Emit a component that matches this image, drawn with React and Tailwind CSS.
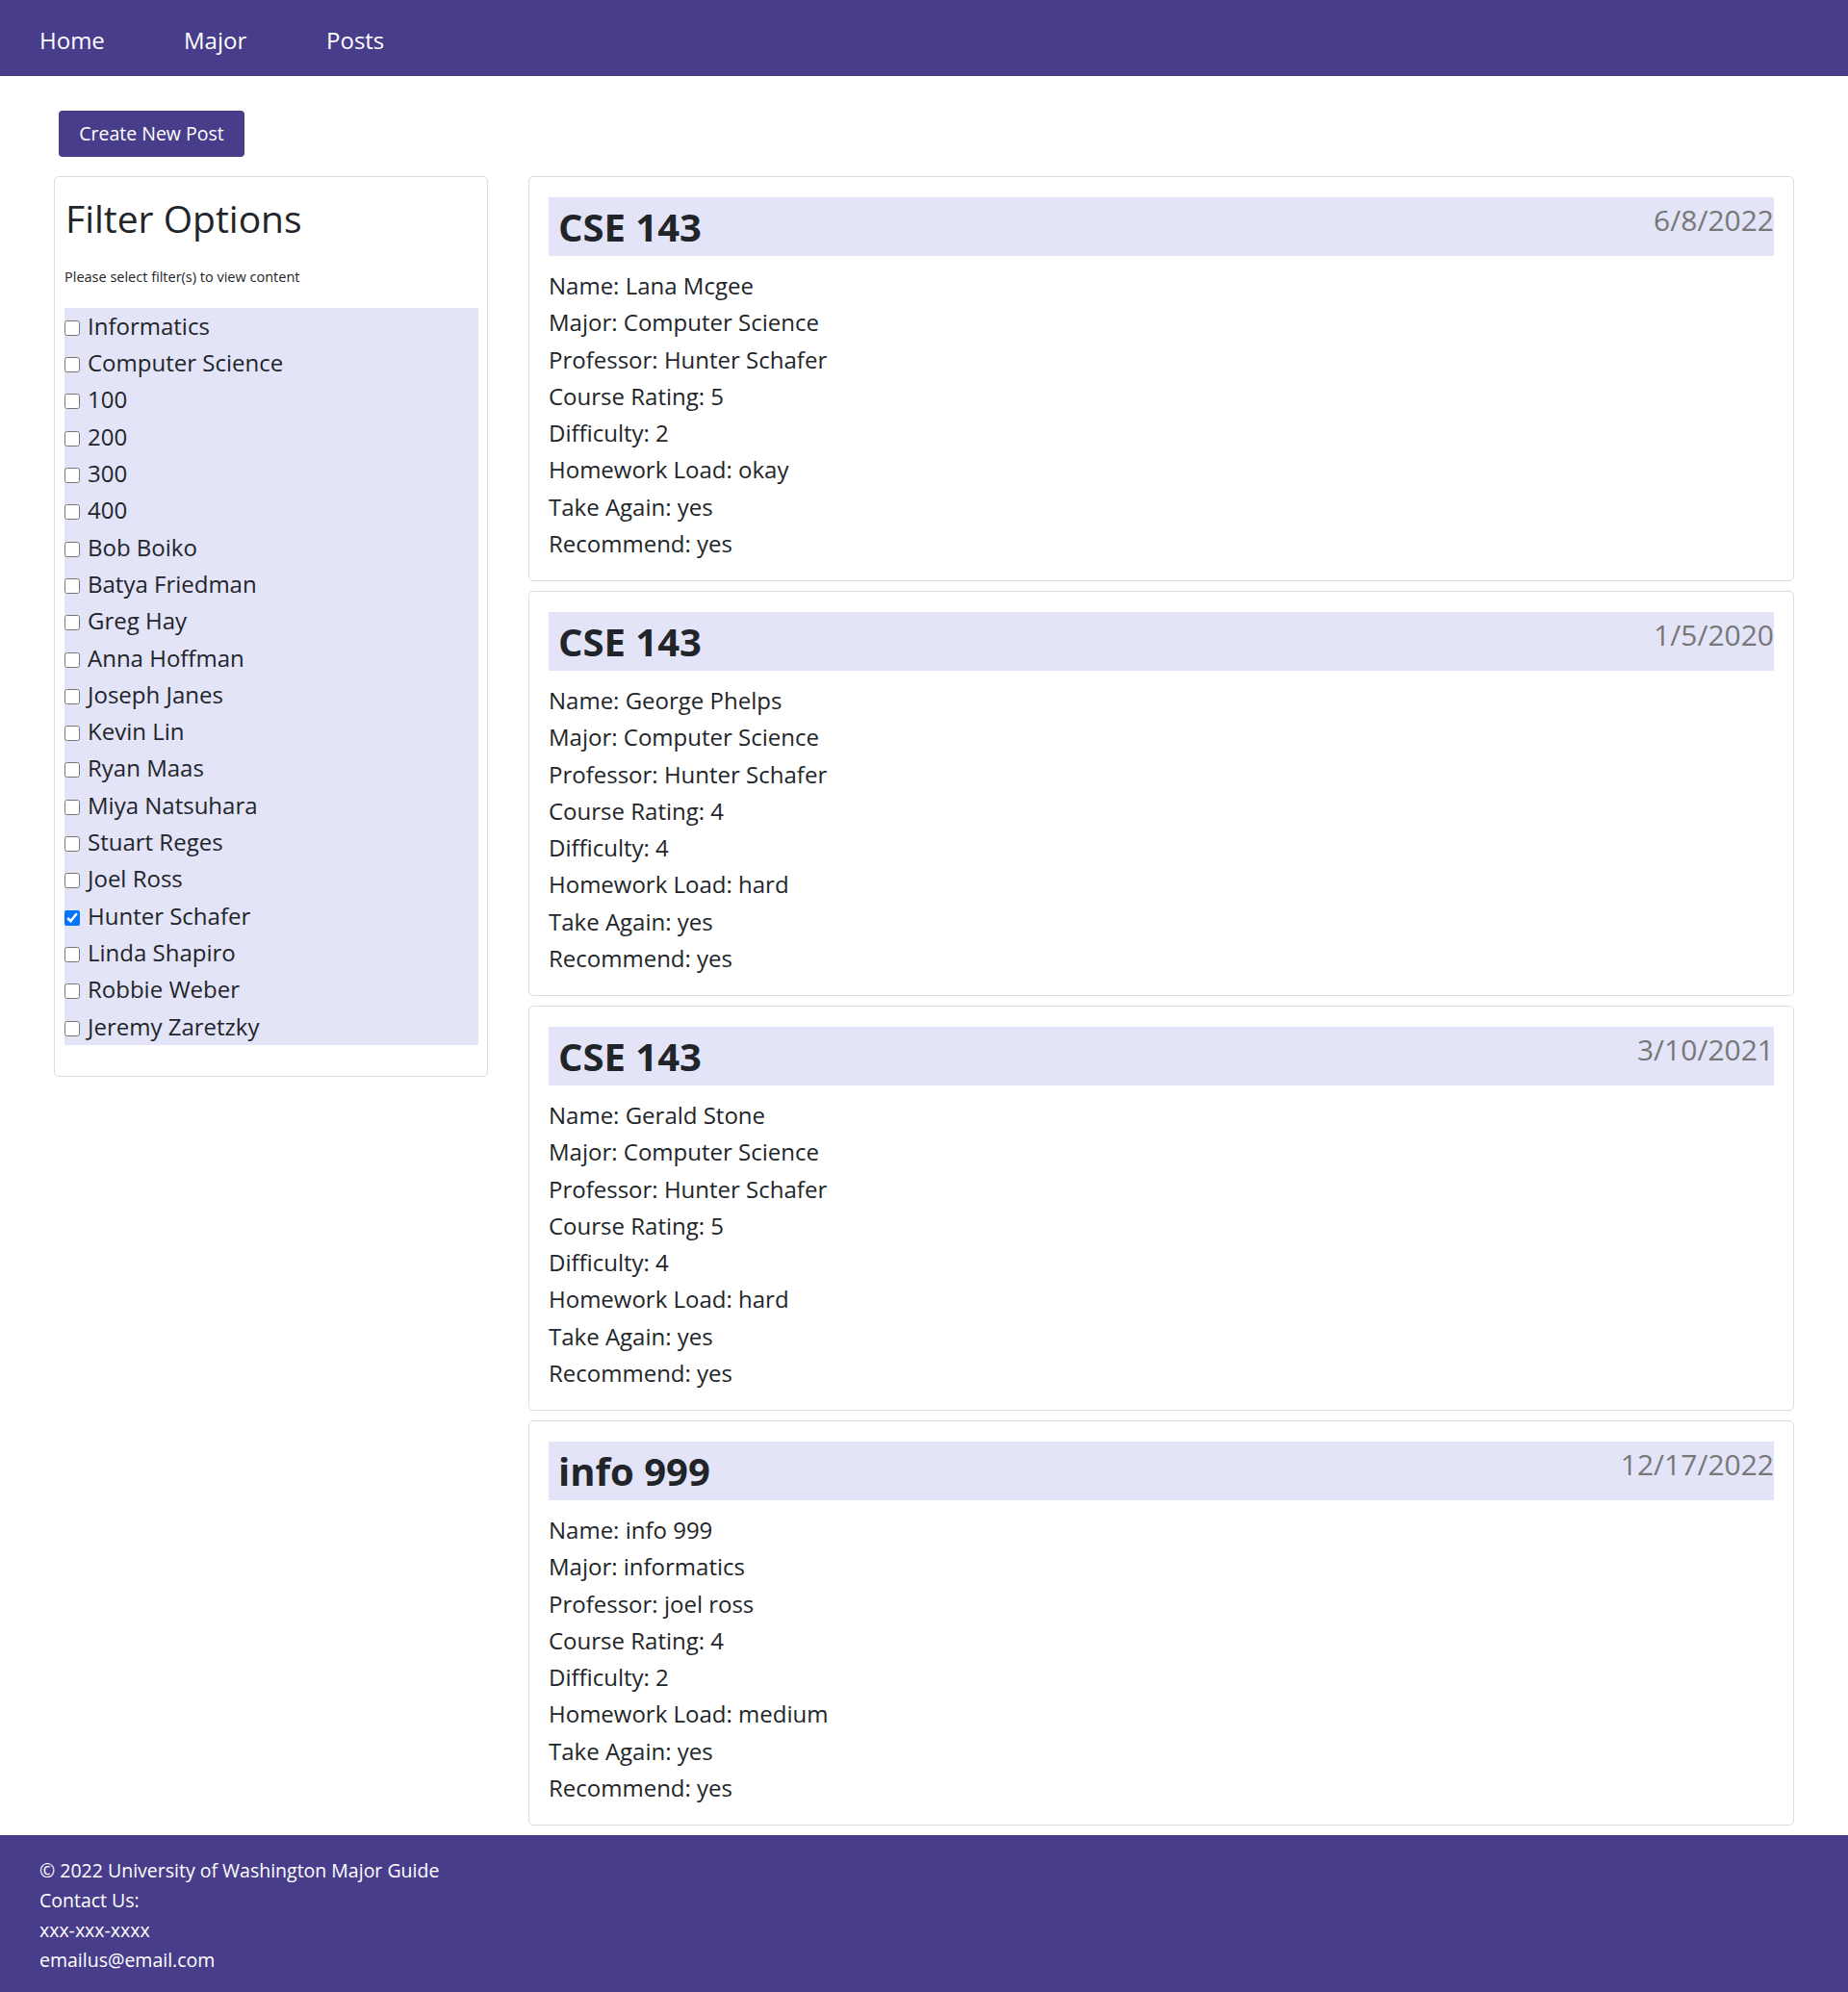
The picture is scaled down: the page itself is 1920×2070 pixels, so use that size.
import { useState } from 'react';

const filterItems = [
  'Informatics', 'Computer Science', '100', '200', '300', '400',
  'Bob Boiko', 'Batya Friedman', 'Greg Hay', 'Anna Hoffman', 'Joseph Janes',
  'Kevin Lin', 'Ryan Maas', 'Miya Natsuhara', 'Stuart Reges', 'Joel Ross',
  'Hunter Schafer', 'Linda Shapiro', 'Robbie Weber', 'Jeremy Zaretzky',
];

const posts = [
  { id: 1, course: 'CSE 143', date: '6/8/2022', name: 'Lana Mcgee', major: 'Computer Science', professor: 'Hunter Schafer', rating: 5, difficulty: 2, load: 'okay', again: 'yes', recommend: 'yes' },
  { id: 2, course: 'CSE 143', date: '1/5/2020', name: 'George Phelps', major: 'Computer Science', professor: 'Hunter Schafer', rating: 4, difficulty: 4, load: 'hard', again: 'yes', recommend: 'yes' },
  { id: 3, course: 'CSE 143', date: '3/10/2021', name: 'Gerald Stone', major: 'Computer Science', professor: 'Hunter Schafer', rating: 5, difficulty: 4, load: 'hard', again: 'yes', recommend: 'yes' },
  { id: 4, course: 'info 999', date: '12/17/2022', name: 'info 999', major: 'informatics', professor: 'joel ross', rating: 4, difficulty: 2, load: 'medium', again: 'yes', recommend: 'yes' },
];

const PostCard = ({ post }) => (
  <div className="border border-[#dcdcdc] rounded-[5px] px-5 pt-[21px] pb-[18.6px]">
    <div className="bg-[#e4e4f8] h-[61px] flex justify-between items-start pl-[10px]">
      <h2 className="text-[40px] font-bold leading-[61px] text-[#212529]">{post.course}</h2>
      <span className="text-[30px] leading-[40px] mt-[4px] text-[#777]">{post.date}</span>
    </div>
    <div className="mt-[12px] text-[24px] leading-[38.3px] text-[#212529]">
      <p>Name: {post.name}</p>
      <p>Major: {post.major}</p>
      <p>Professor: {post.professor}</p>
      <p>Course Rating: {post.rating}</p>
      <p>Difficulty: {post.difficulty}</p>
      <p>Homework Load: {post.load}</p>
      <p>Take Again: {post.again}</p>
      <p>Recommend: {post.recommend}</p>
    </div>
  </div>
);

const App = () => {
  const [checked, setChecked] = useState(['Hunter Schafer']);

  const toggle = (item) => {
    setChecked(prev => prev.includes(item) ? prev.filter(i => i !== item) : [...prev, item]);
  };

  return (
    <div className="min-h-[2070px] flex flex-col bg-white text-[#212529]" style={{ fontFamily: '"Open Sans", "Noto Sans", sans-serif' }}>
      <nav className="bg-[#483d8b] h-[79px] flex items-center pt-1 pl-[41px] text-white text-[24px]">
        <a className="w-[150px]">Home</a>
        <a className="w-[148px]">Major</a>
        <a>Posts</a>
      </nav>

      <main className="flex-1 px-[56px] pt-9">
        <button className="ml-[5px] bg-[#483d8b] text-white text-[19.5px] rounded-[4px] h-12 w-[193px]">
          Create New Post
        </button>

        <div className="flex gap-[42px] mt-5">
          {/* Filters */}
          <aside className="w-[451px] shrink-0 self-start border border-[#dcdcdc] rounded-[5px] pl-[10px] pr-[9px] pt-[19px] pb-[32px]">
            <h1 className="text-[39px] leading-[48px] pl-px">Filter Options</h1>
            <p className="text-[14.5px] mt-[26px] mb-[21px]">Please select filter(s) to view content</p>
            <div className="bg-[#e4e4f8]">
              {filterItems.map(item => (
                <label key={item} className="flex items-center h-[38.3px] text-[24px]">
                  <input
                    type="checkbox"
                    checked={checked.includes(item)}
                    onChange={() => toggle(item)}
                    className="w-4 h-4 m-0 mt-[4px] mr-[8px]"
                  />
                  {item}
                </label>
              ))}
            </div>
          </aside>

          {/* Posts */}
          <section className="flex-1 flex flex-col gap-[10px] mb-[10px]">
            {posts.map(p => <PostCard key={p.id} post={p} />)}
          </section>
        </div>
      </main>

      <footer className="bg-[#483d8b] text-white text-[19.5px] leading-[31px] px-[41px] pt-[21px] pb-[19px]">
        <p>© 2022 University of Washington Major Guide</p>
        <p>Contact Us:</p>
        <p>xxx-xxx-xxxx</p>
        <p>emailus@email.com</p>
      </footer>
    </div>
  );
};

export default App;
